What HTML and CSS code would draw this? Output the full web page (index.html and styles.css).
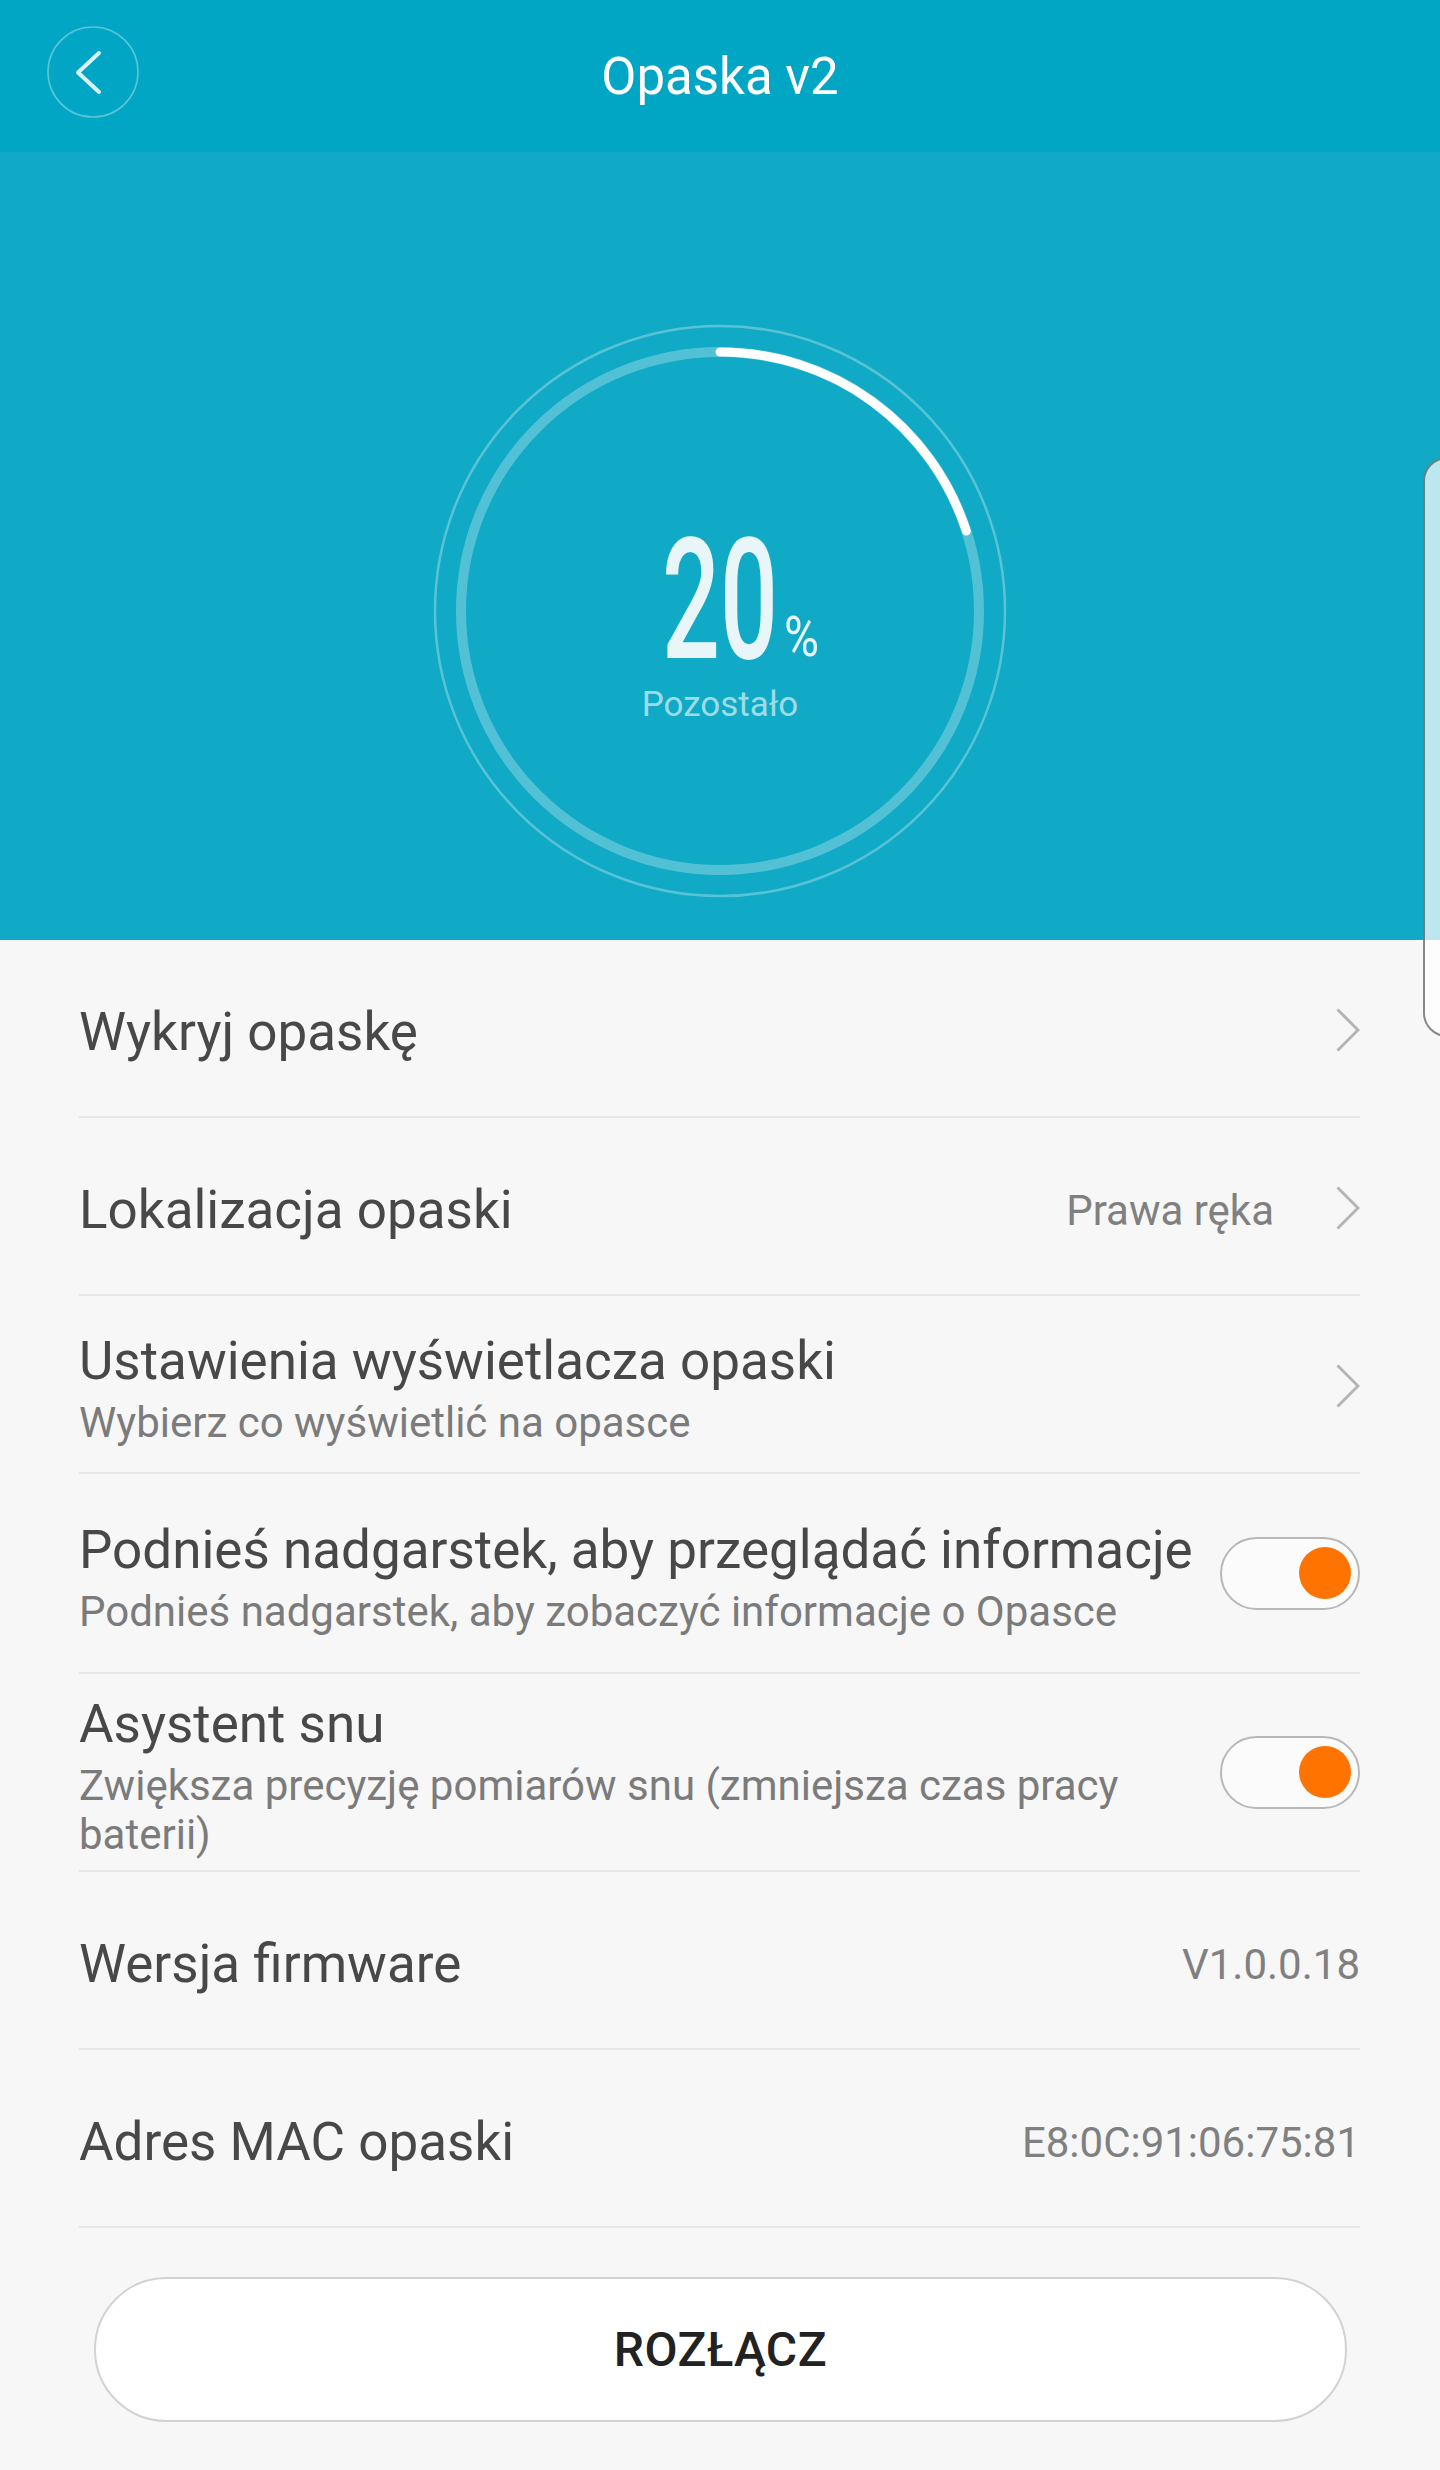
FILE: index.html
```
<!DOCTYPE html>
<html lang="pl">
<head>
<meta charset="utf-8">
<title>Opaska v2</title>
<link rel="stylesheet" href="styles.css">
</head>
<body>
<header class="appbar">
  <button class="back" aria-label="Wstecz">
    <svg class="back__icon" width="92" height="92" viewBox="0 0 92 92">
      <circle class="back__ring" cx="46" cy="46" r="45"/>
      <path class="back__chev" d="M52 27 L31 46.5 L52 66"/>
    </svg>
  </button>
  <h1 class="appbar__title">Opaska v2</h1>
  <span class="appbar__spacer"></span>
</header>

<section class="hero">
  <svg class="gauge" width="600" height="600" viewBox="0 0 600 600">
    <circle class="gauge__outer" cx="300" cy="300" r="285"/>
    <circle class="gauge__track" cx="300" cy="300" r="259"/>
    <path class="gauge__arc" d="M300 41 A259 259 0 0 1 546.3 220"/>
    <text class="gauge__num" x="242" y="347" textLength="116" lengthAdjust="spacingAndGlyphs">20</text>
    <text class="gauge__pct" x="364" y="345" textLength="35" lengthAdjust="spacingAndGlyphs">%</text>
    <text class="gauge__label" x="300" y="405">Pozostało</text>
  </svg>
</section>

<main class="settings">
  <div class="row">
    <div class="row__text"><div class="row__title">Wykryj opaskę</div></div>
    <svg class="chev" width="24" height="44" viewBox="0 0 24 44"><path d="M1.5 1.5 L22 22 L1.5 42.5"/></svg>
  </div>
  <div class="row">
    <div class="row__text"><div class="row__title">Lokalizacja opaski</div></div>
    <div class="row__end">
      <span class="row__value">Prawa ręka</span>
      <svg class="chev" width="24" height="44" viewBox="0 0 24 44"><path d="M1.5 1.5 L22 22 L1.5 42.5"/></svg>
    </div>
  </div>
  <div class="row">
    <div class="row__text">
      <div class="row__title">Ustawienia wyświetlacza opaski</div>
      <div class="row__sub">Wybierz co wyświetlić na opasce</div>
    </div>
    <svg class="chev" width="24" height="44" viewBox="0 0 24 44"><path d="M1.5 1.5 L22 22 L1.5 42.5"/></svg>
  </div>
  <div class="row row--h200">
    <div class="row__text">
      <div class="row__title">Podnieś nadgarstek, aby przeglądać informacje</div>
      <div class="row__sub">Podnieś nadgarstek, aby zobaczyć informacje o Opasce</div>
    </div>
    <div class="switch"><span class="switch__knob"></span></div>
  </div>
  <div class="row row--h198">
    <div class="row__text">
      <div class="row__title">Asystent snu</div>
      <div class="row__sub">Zwiększa precyzję pomiarów snu (zmniejsza czas pracy baterii)</div>
    </div>
    <div class="switch"><span class="switch__knob"></span></div>
  </div>
  <div class="row">
    <div class="row__text"><div class="row__title">Wersja firmware</div></div>
    <span class="row__value">V1.0.0.18</span>
  </div>
  <div class="row">
    <div class="row__text"><div class="row__title">Adres MAC opaski</div></div>
    <span class="row__value">E8:0C:91:06:75:81</span>
  </div>
</main>

<div class="actions">
  <button class="disconnect">ROZŁĄCZ</button>
</div>

<div class="edge-handle"></div>
</body>
</html>
```
FILE: styles.css
```
html, body {
  margin: 0;
  padding: 0;
}
body {
  width: 1440px;
  height: 2470px;
  background: #f7f7f7;
  font-family: Roboto, "Noto Sans", "Liberation Sans", sans-serif;
  position: relative;
  overflow: hidden;
}

/* App bar */
.appbar {
  height: 152px;
  background: #00a6c4;
  display: grid;
  grid-template-columns: 1fr auto 1fr;
  align-items: center;
}
.back {
  justify-self: start;
  margin: -8px 0 0 47px;
  padding: 0;
  width: 92px;
  height: 92px;
  border: none;
  background: transparent;
  display: block;
}
.back__icon { display: block; }
.back__ring {
  fill: none;
  stroke: rgba(255, 255, 255, 0.35);
  stroke-width: 1.6;
}
.back__chev {
  fill: none;
  stroke: rgba(235, 250, 252, 0.92);
  stroke-width: 4;
  stroke-linecap: round;
  stroke-linejoin: round;
}
.appbar__title {
  margin: 0;
  color: #ffffff;
  font-size: 51px;
  font-weight: 400;
}

/* Hero gauge */
.hero {
  height: 788px;
  box-sizing: border-box;
  padding-top: 159px;
  background: #10aac6;
  display: flex;
  justify-content: center;
  align-items: flex-start;
}
.gauge { display: block; }
.gauge__outer {
  fill: none;
  stroke: rgba(255, 255, 255, 0.3);
  stroke-width: 2.5;
}
.gauge__track {
  fill: none;
  stroke: rgba(255, 255, 255, 0.28);
  stroke-width: 10;
}
.gauge__arc {
  fill: none;
  stroke: #ffffff;
  stroke-width: 9;
  stroke-linecap: round;
}
.gauge__num {
  font-family: Roboto, "Noto Sans", sans-serif;
  font-size: 169px;
  font-weight: 500;
  fill: #e9f6f9;
}
.gauge__pct {
  font-family: Roboto, "Noto Sans", sans-serif;
  font-size: 56px;
  font-weight: 400;
  fill: #e9f6f9;
}
.gauge__label {
  font-family: Roboto, "Noto Sans", sans-serif;
  font-size: 35px;
  fill: rgba(255, 255, 255, 0.6);
  text-anchor: middle;
}

/* Settings list */
.settings {
  margin: 0 80px 0 79px;
}
.row {
  display: flex;
  align-items: center;
  gap: 20px;
  box-sizing: border-box;
  height: 178px;
  padding-top: 8px;
  border-bottom: 2px solid #e6e6e6;
}
.row--h200 { height: 200px; }
.row--h198 { height: 198px; }
.row__text {
  flex: 1;
  min-width: 0;
}
.row__title {
  font-size: 53px;
  line-height: 62px;
  color: #484848;
  white-space: nowrap;
}
.row__sub {
  margin-top: 6px;
  font-size: 42px;
  line-height: 49px;
  color: #7b7b7b;
}
.row__end {
  display: flex;
  align-items: center;
  gap: 62px;
}
.row__value {
  font-size: 42px;
  color: #808080;
  white-space: nowrap;
}
.chev {
  display: block;
  flex: none;
  margin-top: -5px;
}
.chev path {
  fill: none;
  stroke: #b4b4b4;
  stroke-width: 3;
}

/* Switch */
.switch {
  flex: none;
  margin-top: -8px;
  width: 140px;
  height: 73px;
  box-sizing: border-box;
  border: 2px solid #b8b8b8;
  border-radius: 37px;
  background: #fbfbfb;
  display: flex;
  align-items: center;
  justify-content: flex-end;
  padding-right: 7px;
}
.switch__knob {
  width: 52px;
  height: 52px;
  border-radius: 50%;
  background: #ff7300;
}

/* Disconnect button */
.actions {
  padding: 49px 93px 0 94px;
}
.disconnect {
  display: flex;
  justify-content: center;
  align-items: center;
  width: 100%;
  height: 145px;
  box-sizing: border-box;
  border: 2px solid #d2d2d2;
  border-radius: 73px;
  background: #ffffff;
  font-family: Roboto, "Noto Sans", sans-serif;
  font-size: 48px;
  font-weight: 500;
  color: #222222;
  letter-spacing: 0.5px;
  padding: 0;
}

/* Edge panel handle overlay */
.edge-handle {
  position: absolute;
  left: 1423px;
  top: 457px;
  width: 40px;
  height: 580px;
  box-sizing: border-box;
  border: 2px solid rgba(40, 40, 40, 0.55);
  border-right: none;
  border-radius: 24px 0 0 24px;
  background: rgba(255, 255, 255, 0.72);
}
```
